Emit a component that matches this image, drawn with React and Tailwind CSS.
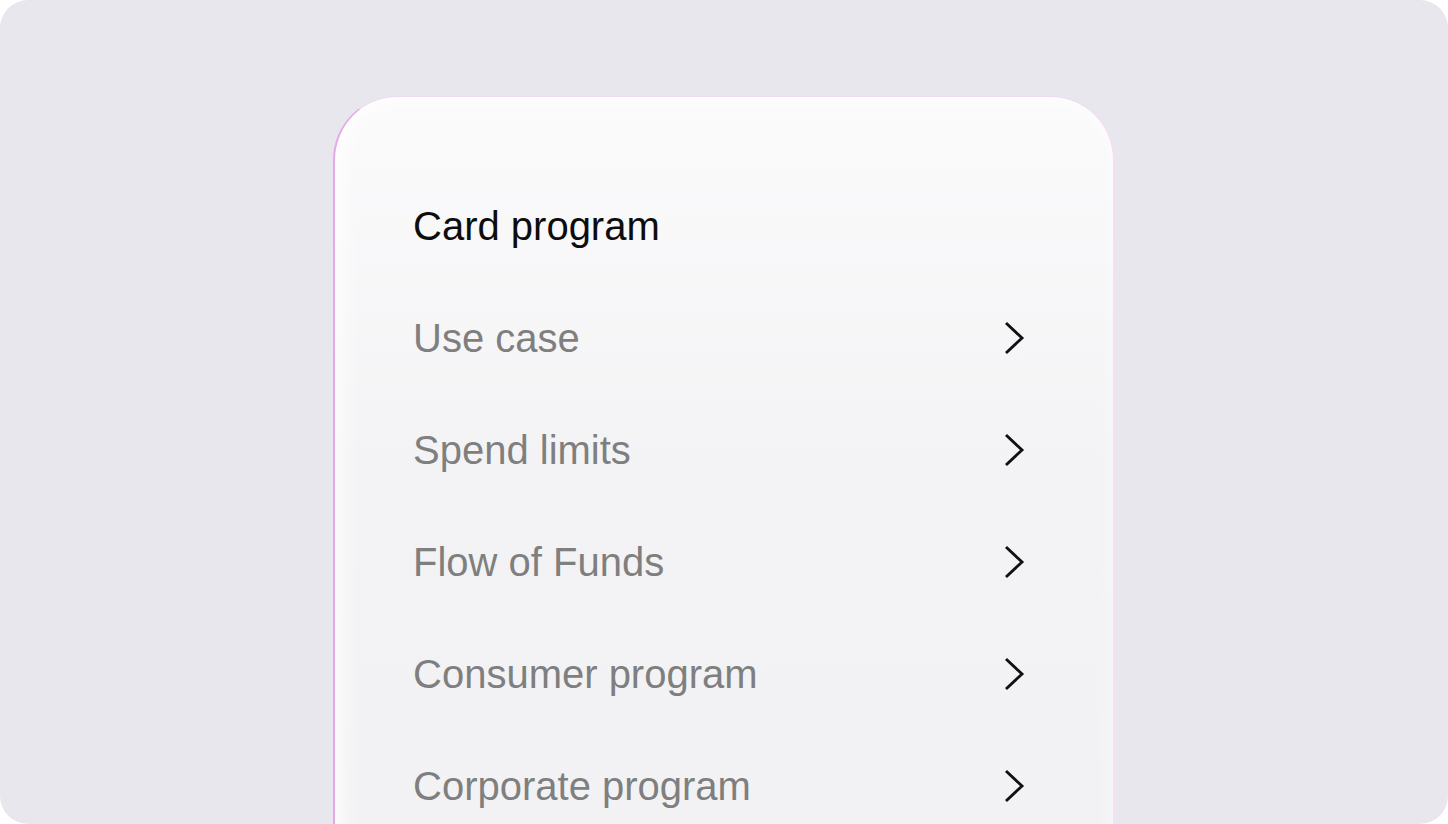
const items = ['Use case', 'Spend limits', 'Flow of Funds', 'Consumer program', 'Corporate program'];

function Chevron() {
  return (
    <svg width="22" height="34" viewBox="0 0 22 34" fill="none" className="shrink-0">
      <path d="M3 2 L19 17 L3 32" stroke="#111" strokeWidth="2.9" strokeLinecap="butt" strokeLinejoin="miter" />
    </svg>
  );
}

export default function App() {
  return (
    <div className="w-[1448px] h-[824px] bg-white" style={{ fontFamily: '"Liberation Sans", Arial, sans-serif' }}>
      <div className="h-full rounded-[28px] bg-[#e8e7ee] overflow-hidden flex justify-center pt-[96px]">
        <div className="w-[782px] h-[760px] rounded-t-[64px] border-l-[2px] border-t-[1px] border-r-[2px] border-l-[#e6a8e8] border-t-[#eedcf0] border-r-[#f6def4] bg-gradient-to-b from-[#fbfbfc] via-[#f3f3f5] to-[#f2f2f4] shadow-[inset_6px_0_24px_rgba(255,255,255,0.95)] pl-[78px] pr-[88px] pt-[105px]">
          <h1 className="text-[40px] leading-[48px] text-[#0d0d0d]">Card program</h1>
          <ul className="mt-[64px] flex flex-col gap-[64px]">
            {items.map((label) => (
              <li key={label} className="flex items-center justify-between h-[48px]">
                <span className="text-[40px] leading-[48px] text-[#7f7f7f]">{label}</span>
                <Chevron />
              </li>
            ))}
          </ul>
        </div>
      </div>
    </div>
  );
}
